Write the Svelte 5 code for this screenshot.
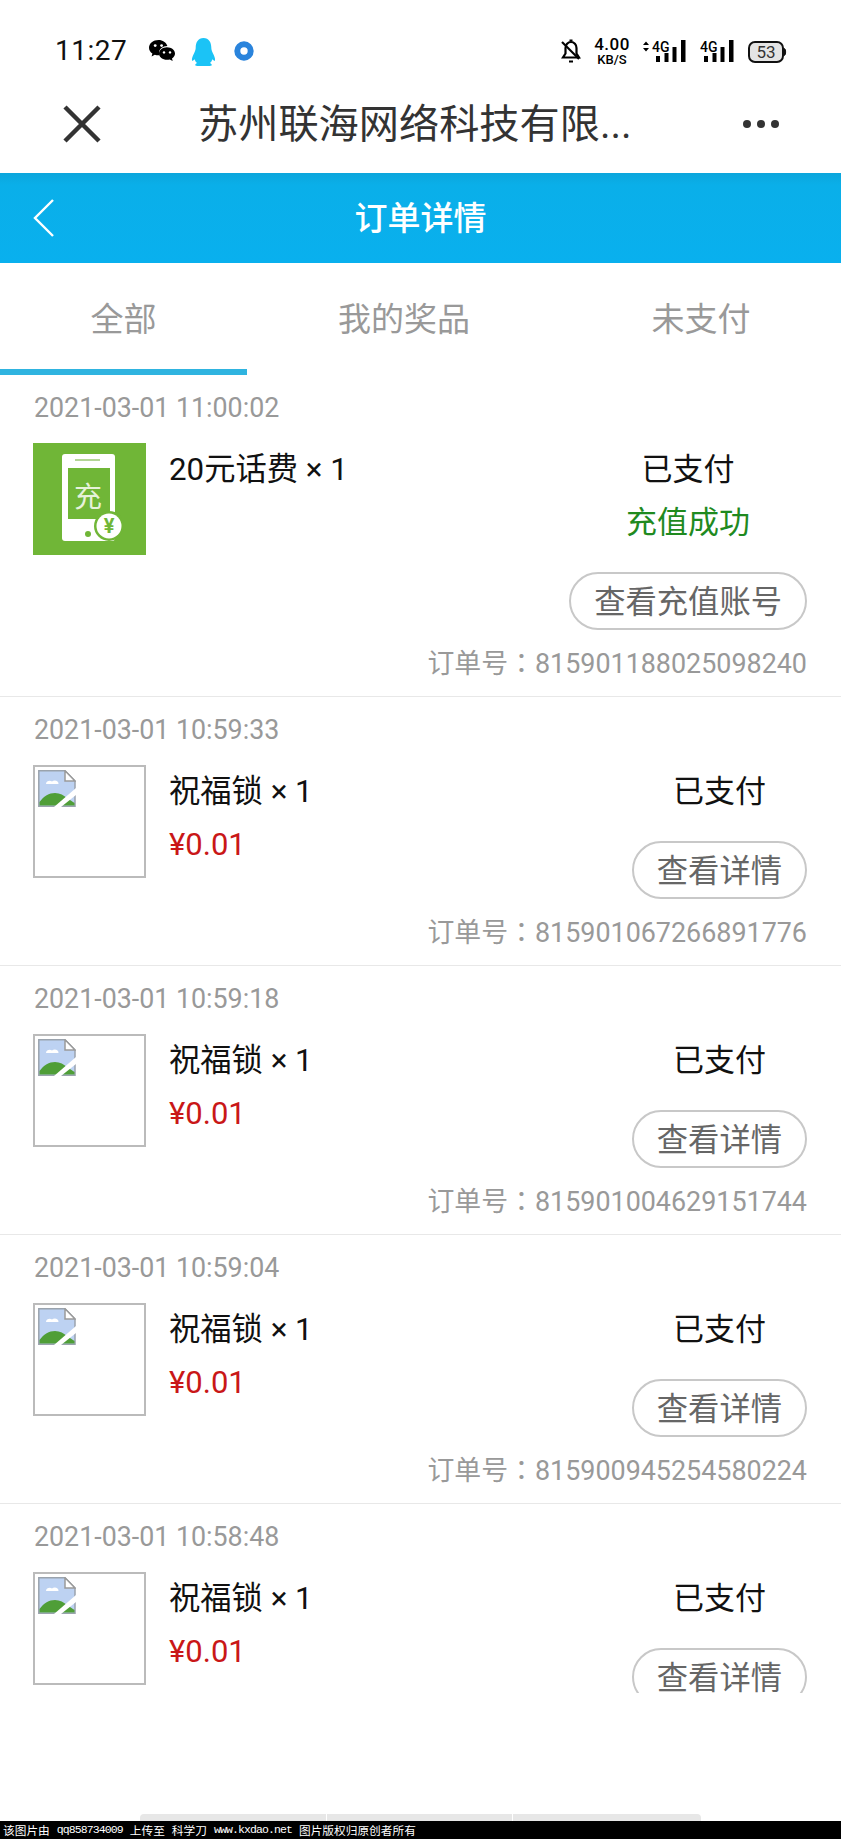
<script>
  const orders = [
    { date: '2021-03-01 11:00:02', name: '20元话费 × 1', no: '815901188025098240', phone: true, btn: '查看充值账号' },
    { date: '2021-03-01 10:59:33', name: '祝福锁 × 1', no: '815901067266891776', btn: '查看详情' },
    { date: '2021-03-01 10:59:18', name: '祝福锁 × 1', no: '815901004629151744', btn: '查看详情' },
    { date: '2021-03-01 10:59:04', name: '祝福锁 × 1', no: '815900945254580224', btn: '查看详情' },
    { date: '2021-03-01 10:58:48', name: '祝福锁 × 1', btn: '查看详情' }
  ];
</script>

<div class="page">
  <div class="status">
    <span class="time">11:27</span>
    <svg class="wechat" width="26" height="23" viewBox="0 0 26 23">
      <path d="M9.5 0C4.3 0 0 3.4 0 7.7c0 2.4 1.300 4.500 3.400 5.900L2.600 16.400l3.200-1.700c1.100.4 2.300.6 3.700.6l1 0c-.4-.9-.5-1.700-.5-2.500 0-3.900 3.700-6.900 8.400-6.900C17.200 2.600 13.700 0 9.500 0z" fill="#000"/>
      <circle cx="6.200" cy="5.600" r="1.400" fill="#fff"/><circle cx="12.600" cy="5.600" r="1.400" fill="#fff"/>
      <path d="M18 7.200c-4.400 0-8 2.800-8 6.300s3.600 6.300 8 6.300c1 0 1.900-.1 2.700-.4l3 1.600-.7-2.600c1.800-1.200 3-2.900 3-4.900 0-3.500-3.600-6.300-8-6.300z" fill="#000"/>
      <circle cx="15" cy="12.400" r="1.200" fill="#fff"/><circle cx="21" cy="12.400" r="1.200" fill="#fff"/>
    </svg>
    <svg class="qq" width="25" height="28" viewBox="0 0 25 28">
      <path d="M12.500 0C7 0 4.700 4.500 4.700 9.500c0 2-.5 3.500-1.700 6C1.800 18 .5 20.500 1 22.500c.3 1 1.800-.4 2.600-1.300.4 1.500 1.400 3 2.400 3.800-1 .5-2 1.500-1.800 2.300.2.600 1.500.7 3.300.7h10c1.800 0 3.100-.1 3.300-.7.200-.8-.8-1.800-1.800-2.300 1-.8 2-2.300 2.400-3.800.8.900 2.300 2.300 2.600 1.300.5-2-.8-4.500-2-7-1.200-2.500-1.700-4-1.700-6C20.300 4.500 18 0 12.500 0z" fill="#1bc3f6"/>
    </svg>
    <svg class="ring" width="20" height="20" viewBox="0 0 20 20">
      <circle cx="10" cy="10" r="6.700" fill="none" stroke="#2a84dc" stroke-width="6"/>
    </svg>

    <div class="status-right">
      <svg class="bell" width="22" height="26" viewBox="0 0 22 26" fill="none" stroke="#000" stroke-width="2.200">
        <path d="M3 19.500h16l-2.500-4V10c0-3.300-2.400-6-5.500-6S5.500 6.700 5.500 10v5.500z"/>
        <path d="M2 4l17 17"/>
        <path d="M9.500 2.500h3M9 23.500h4"/>
      </svg>
      <div class="speed"><span class="s1">4.00</span><span class="s2">KB/S</span></div>
      <svg width="44" height="24" viewBox="0 0 44 24" class="sig1">
        <path d="M4 1.500L1 5h6zM4 11.500L1 8h6z" fill="#000"/>
        <text x="10" y="12" class="g">4G</text>
        <rect x="14" y="16" width="4" height="6" fill="#000"/>
        <rect x="22.500" y="13" width="4" height="9" fill="#000"/>
        <rect x="30.500" y="7" width="4" height="15" fill="#000"/>
        <rect x="39" y="0" width="4.500" height="22" fill="#000"/>
      </svg>
      <svg width="34" height="24" viewBox="0 0 34 24" class="sig2">
        <text x="0" y="12" class="g">4G</text>
        <rect x="4" y="16" width="4" height="6" fill="#000"/>
        <rect x="12.500" y="13" width="4" height="9" fill="#000"/>
        <rect x="20.500" y="7" width="4" height="15" fill="#000"/>
        <rect x="29" y="0" width="4.500" height="22" fill="#000"/>
      </svg>
      <svg width="39" height="22" viewBox="0 0 39 22" class="batt">
        <rect x="1" y="1" width="34" height="20" rx="6" fill="#e4e4e4" stroke="#111" stroke-width="2"/>
        <path d="M36.500 7.500c1.500.5 1.500 6.500 0 7z" fill="#111" stroke="#111"/>
        <text x="18" y="17" text-anchor="middle" class="b">53</text>
      </svg>
    </div>
  </div>

  <div class="titlebar">
    <svg class="close" width="38" height="38" viewBox="0 0 38 38" fill="none" stroke="#333" stroke-width="4.500">
      <path d="M2 2l34 34M36 2L2 36"/>
    </svg>
    <span class="ttl">苏州联海网络科技有限...</span>
    <svg class="more" width="38" height="10" viewBox="0 0 38 10" fill="#333">
      <circle cx="5" cy="5" r="4"/><circle cx="19" cy="5" r="4"/><circle cx="33" cy="5" r="4"/>
    </svg>
  </div>

  <header class="header">
    <svg class="back" width="22" height="38" viewBox="0 0 22 38" fill="none" stroke="#fff" stroke-width="2.400">
      <path d="M20 1L2 19l18 18"/>
    </svg>
    <h1>订单详情</h1>
  </header>

  <nav class="tabs">
    <div class="tab active">全部</div>
    <div class="tab">我的奖品</div>
    <div class="tab">未支付</div>
  </nav>

  <div class="list">
    {#each orders as o}
      <section class="order">
        <div class="date">{o.date}</div>
        <div class="row">
          {#if o.phone}
            <svg class="thumb" width="113" height="112" viewBox="0 0 113 112">
              <rect width="113" height="112" fill="#70b637"/>
              <rect x="29" y="11" width="53" height="87" rx="3" fill="#fff"/>
              <rect x="35" y="25" width="42" height="51" fill="#70b637"/>
              <rect x="42" y="16" width="25" height="2" fill="#b4d596"/>
              <circle cx="55" cy="91" r="3" fill="#70b637"/>
              <text x="55" y="64" text-anchor="middle" class="chong">充</text>
              <circle cx="76" cy="83" r="15" fill="#70b637"/>
              <circle cx="76" cy="83" r="12.500" fill="#fff"/>
              <text x="76" y="90" text-anchor="middle" class="yen">¥</text>
            </svg>
          {:else}
            <div class="thumb broken">
              <svg width="38" height="37" viewBox="0 0 38 37">
                <path d="M0.800 0.800H27L37 11v25.200H0.800z" fill="#bdd2f2" stroke="#9aa3ad" stroke-width="1.500"/>
                <path d="M27 0.800V11H37z" fill="#fff" stroke="#9a9a9a" stroke-width="1.500"/>
                <path d="M8 14c0-3 4-4 6-2.500 2-2 7-1 6.500 2.500z" fill="#fff"/>
                <path d="M1.500 35.500V32C6 26 11 23 17 23c5 0 9 2.500 12 5l7.500 5v2.500z" fill="#4f9e37"/>
                <path d="M38 18L16 37h7l15-12z" fill="#fff"/>
              </svg>
            </div>
          {/if}
          <div class="info">
            <div class="name">{o.name}</div>
            {#if !o.phone}<div class="price">¥0.01</div>{/if}
          </div>
          <div class="side">
            <div class="paid">已支付</div>
            {#if o.phone}<div class="ok">充值成功</div>{/if}
            <button class="btn">{o.btn}</button>
          </div>
        </div>
        {#if o.no}
          <div class="no">订单号<span class="colon">：</span>{o.no}</div>
        {/if}
      </section>
    {/each}
  </div>

  <div class="bottom">
    <div class="seg seg1"></div>
    <div class="seg seg2"></div>
    <div class="seg seg3"></div>
  </div>
  <footer class="mark">
    <span>该图片由</span>
    <span class="lat">qq858734009</span>
    <span>上传至</span>
    <span>科学刀</span>
    <span class="lat">www.kxdao.net</span>
    <span>图片版权归原创者所有</span>
  </footer>
</div>

<style>
  :global(body) {
    margin: 0;
    background: #fff;
  }
  .page {
    width: 841px;
    height: 1839px;
    overflow: hidden;
    font-family: Roboto, "Noto Sans CJK SC", sans-serif;
    background: #fff;
    display: flex;
    flex-direction: column;
  }
  .status {
    height: 84px;
    box-sizing: border-box;
    padding: 34px 54px 0 55px;
    display: flex;
    align-items: flex-start;
  }
  .time {
    font-size: 28px;
    line-height: 34px;
    letter-spacing: 0.5px;
    color: #111;
    width: 94px;
  }
  .wechat { margin-top: 6px; }
  .qq { margin: 4px 0 0 16px; }
  .ring { margin: 7px 0 0 18px; }
  .status-right {
    margin-left: auto;
    display: flex;
    align-items: flex-start;
  }
  .bell { margin-top: 4px; }
  .speed {
    display: flex;
    flex-direction: column;
    align-items: center;
    margin: 3px 0 0 10px;
    width: 40px;
    color: #000;
    font-family: Roboto, sans-serif;
  }
  .s1 { font-size: 17px; line-height: 15px; letter-spacing: 0.5px; font-weight: 500; }
  .s2 { font-size: 13px; line-height: 15px; font-weight: 500; }
  .sig1 { margin: 6px 0 0 10px; }
  .sig2 { margin: 6px 0 0 14px; }
  .batt { margin: 7px 0 0 14px; }
  .g { font: 500 14px Roboto, sans-serif; fill: #000; }
  .b { font: 17px Roboto, sans-serif; fill: #333; }

  .titlebar {
    height: 89px;
    display: flex;
    align-items: center;
    padding: 0 61px 0 63px;
    background: #fff;
  }
  .close { flex: none; margin-top: -9px; }
  .ttl {
    margin-left: 97px;
    font-size: 40.200px;
    color: #333;
    line-height: 1;
    margin-top: -7px;
  }
  .more { margin-left: auto; margin-top: -10px; }

  .header {
    height: 90px;
    background: linear-gradient(#0ca6dc 0, #0aafe9 12px, #09b0ee 100%);
    position: relative;
    display: flex;
    align-items: center;
    justify-content: center;
  }
  .back { position: absolute; left: 33px; top: 26px; }
  .header h1 {
    margin: 0;
    font-size: 33px;
    font-weight: 500;
    color: #fff;
    line-height: 1;
  }

  .tabs {
    height: 112px;
    flex: none;
    display: grid;
    grid-template-columns: 247px 314px 280px;
    grid-template-rows: 112px;
  }
  .tab {
    position: relative;
    height: 112px;
    font-size: 33px;
    color: #999;
    text-align: center;
    padding-top: 33px;
    line-height: 48px;
    box-sizing: border-box;
  }
  .tab.active::after {
    content: "";
    position: absolute;
    left: 0;
    right: 0;
    bottom: 0;
    height: 6px;
    background: #2fb4e0;
  }

  .list {
    height: 1318px;
    overflow: hidden;
    flex: none;
  }
  .order {
    border-bottom: 1px solid #e8e8e8;
    padding: 0 34px 0 33px;
  }
  .date {
    height: 68px;
    line-height: 66px;
    font-size: 26.800px;
    color: #999;
    padding-left: 1px;
  }
  .row {
    display: flex;
    align-items: flex-start;
  }
  .thumb {
    flex: none;
    display: block;
  }
  .broken {
    width: 113px;
    height: 113px;
    box-sizing: border-box;
    border: 2px solid #bbb;
    padding: 3px;
    background: #fff;
  }
  .broken svg { display: block; }
  .chong { font: 28px "Noto Sans CJK SC", sans-serif; fill: #e6f2da; }
  .yen { font: 700 20px Roboto, sans-serif; fill: #70b637; }
  .info { margin-left: 23px; }
  .name {
    font-size: 31.300px;
    line-height: 53px;
    color: #111;
  }
  .price {
    font-size: 31px;
    line-height: 53px;
    color: #c91717;
  }
  .side {
    margin-left: auto;
    display: flex;
    flex-direction: column;
    align-items: center;
  }
  .paid {
    font-size: 31px;
    line-height: 53px;
    color: #111;
  }
  .ok {
    font-size: 31px;
    line-height: 53px;
    color: #1f8a1f;
  }
  .btn {
    margin-top: 23px;
    height: 58px;
    box-sizing: border-box;
    border: 2px solid #c8c8c8;
    border-radius: 29px;
    background: #fff;
    font-family: inherit;
    font-size: 31.300px;
    line-height: 1;
    color: #666;
    padding: 3px 23px 0;
    white-space: nowrap;
  }
  .no {
    height: 66px;
    line-height: 64px;
    font-size: 26.900px;
    color: #999;
    text-align: right;
  }
  .colon { font-family: "Noto Sans CJK TC", sans-serif; }

  .bottom {
    margin-top: 121px;
    height: 7px;
    padding-left: 140px;
    display: flex;
    gap: 1px;
    flex: none;
  }
  .seg { background: #e7e7e7; height: 7px; }
  .seg1 { width: 186px; border-radius: 4px 0 0 0; }
  .seg2 { width: 185px; }
  .seg3 { width: 188px; border-radius: 0 4px 0 0; }
  .mark {
    height: 18px;
    flex: none;
    background: #000;
    color: #fff;
    font-size: 11.700px;
    line-height: 18px;
    padding-left: 3px;
    display: flex;
    gap: 7px;
    white-space: nowrap;
    font-family: "Noto Sans CJK SC", sans-serif;
  }
  .lat {
    font-family: "Liberation Mono", monospace;
    font-size: 11.500px;
    letter-spacing: -0.9px;
  }
</style>
